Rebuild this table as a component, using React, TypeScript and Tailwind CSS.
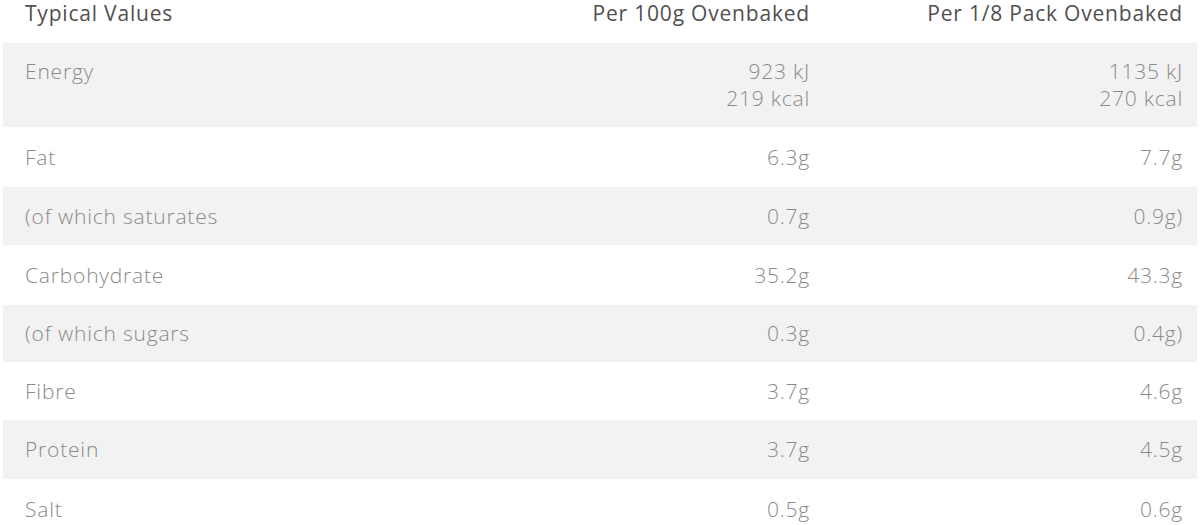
import React from 'react';

type Row = { label: string; per100: string[]; perPack: string[]; h: string; shaded: boolean };

const rows: Row[] = [
  { label: 'Energy', per100: ['923 kJ', '219 kcal'], perPack: ['1135 kJ', '270 kcal'], h: 'h-[84px]', shaded: true },
  { label: 'Fat', per100: ['6.3g'], perPack: ['7.7g'], h: 'h-[60px]', shaded: false },
  { label: '(of which saturates', per100: ['0.7g'], perPack: ['0.9g)'], h: 'h-[58px]', shaded: true },
  { label: 'Carbohydrate', per100: ['35.2g'], perPack: ['43.3g'], h: 'h-[60px]', shaded: false },
  { label: '(of which sugars', per100: ['0.3g'], perPack: ['0.4g)'], h: 'h-[57px]', shaded: true },
  { label: 'Fibre', per100: ['3.7g'], perPack: ['4.6g'], h: 'h-[58px]', shaded: false },
  { label: 'Protein', per100: ['3.7g'], perPack: ['4.5g'], h: 'h-[59px]', shaded: true },
  { label: 'Salt', per100: ['0.5g'], perPack: ['0.6g'], h: 'h-[60px]', shaded: false },
];

const App: React.FC = () => {
  return (
    <div className="w-[1200px] h-[525px] overflow-hidden bg-white px-[3px] font-['Open_Sans',sans-serif] text-[21px] leading-[27px] tracking-[0.8px]">
      <div className="flex h-[43px] items-start text-[#505050]">
        <div className="flex-1 pl-[22px]">Typical Values</div>
        <div className="w-[300px] text-right">Per 100g Ovenbaked</div>
        <div className="w-[387px] pr-[14px] text-right">Per 1/8 Pack Ovenbaked</div>
      </div>
      {rows.map((r) => (
        <div key={r.label} className={`flex items-center ${r.h} ${r.shaded ? 'bg-[#f2f2f2]' : 'bg-white'} text-[#8a8a8a] font-light`}>
          <div className={`flex-1 pl-[22px] ${r.per100.length > 1 ? 'self-start pt-[15px]' : ''}`}>{r.label}</div>
          <div className="w-[300px] text-right">
            {r.per100.map((v) => <div key={v}>{v}</div>)}
          </div>
          <div className="w-[387px] pr-[14px] text-right">
            {r.perPack.map((v) => <div key={v}>{v}</div>)}
          </div>
        </div>
      ))}
    </div>
  );
};

export default App;
